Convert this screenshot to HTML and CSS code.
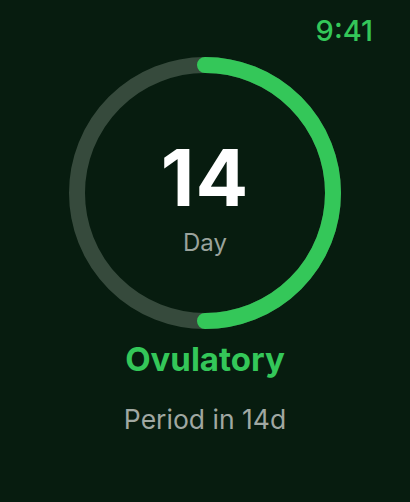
FILE: index.html
```html
<!DOCTYPE html>
<html>
<head>
<meta charset="utf-8">
<link rel="stylesheet" href="styles.css">
</head>
<body>
<div class="screen">
  <div class="status">
    <span class="time">9:41</span>
  </div>
  <div class="ring">
    <svg class="ring-svg" width="272" height="272" viewBox="0 0 272 272">
      <circle cx="136" cy="136" r="128" fill="none" stroke="#364a3c" stroke-width="16"/>
      <path d="M136 8 A128 128 0 0 1 136 264" fill="none" stroke="#34c759" stroke-width="16" stroke-linecap="round"/>
    </svg>
    <div class="ring-label">
      <div class="day-num">14</div>
      <div class="day-word">Day</div>
    </div>
  </div>
  <div class="phase">Ovulatory</div>
  <div class="next">Period in 14d</div>
</div>
</body>
</html>
```
FILE: styles.css
```css
html, body {
  margin: 0;
  padding: 0;
  background: #071c0f;
}
.screen {
  width: 410px;
  height: 502px;
  display: flex;
  flex-direction: column;
  align-items: center;
  font-family: Inter, "Noto Sans", sans-serif;
}
.status {
  align-self: stretch;
  display: flex;
  justify-content: flex-end;
  padding: 16px 37px 0 0;
  height: 45px;
  box-sizing: border-box;
}
.time {
  color: #34c759;
  font-size: 29px;
  font-weight: 500;
  line-height: 29px;
}
.ring {
  display: grid;
  width: 272px;
  height: 272px;
  margin-top: 12px;
}
.ring-svg, .ring-label {
  grid-area: 1 / 1;
}
.ring-label {
  display: flex;
  flex-direction: column;
  align-items: center;
  padding-top: 82px;
}
.day-num {
  color: #ffffff;
  font-size: 78px;
  font-weight: 700;
  line-height: 78px;
  letter-spacing: 1px;
}
.day-word {
  color: #9aa39c;
  font-size: 24px;
  line-height: 24px;
  margin-top: 14px;
}
.phase {
  color: #34c759;
  font-size: 33px;
  font-weight: 700;
  line-height: 33px;
  margin-top: 14px;
}
.next {
  color: #a0a8a2;
  font-size: 26.5px;
  line-height: 27px;
  margin-top: 30px;
}
```
